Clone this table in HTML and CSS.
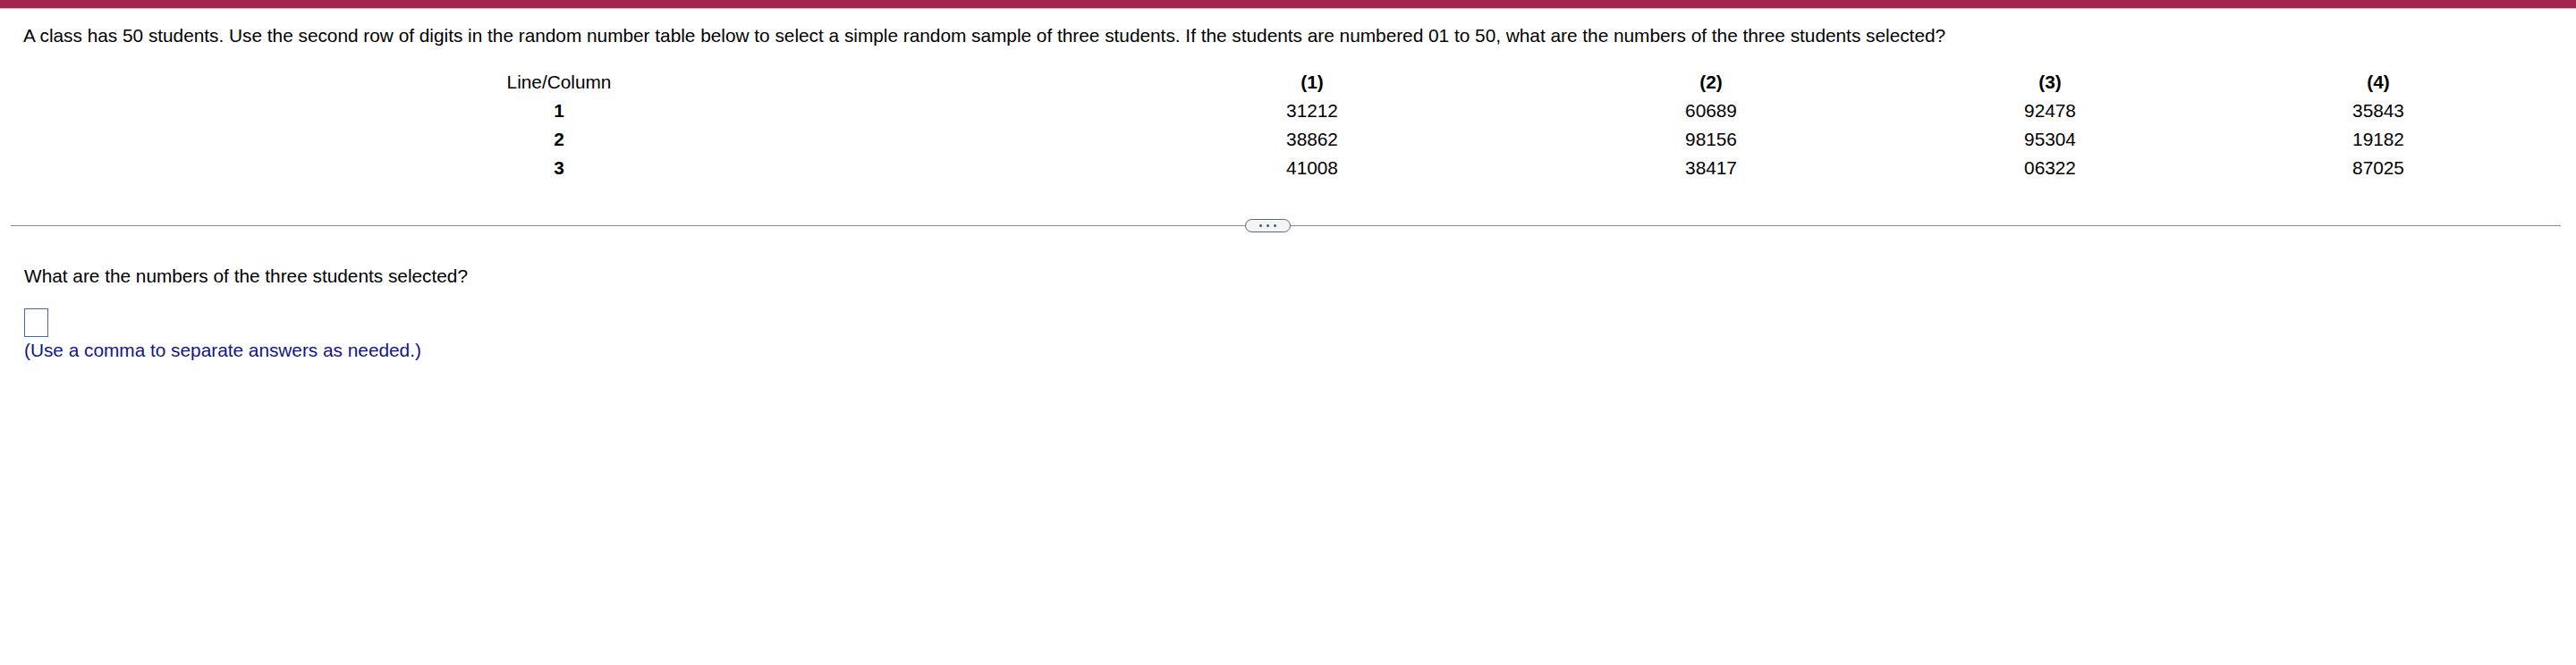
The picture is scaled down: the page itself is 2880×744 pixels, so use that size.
FILE: index.html
```html
<!DOCTYPE html>
<html lang="en">
<head>
<meta charset="utf-8">
<title>Random sample question</title>
<link rel="stylesheet" href="styles.css">
</head>
<body>
<div class="topbar"></div>
<main class="page">
  <p class="question">A class has 50 students. Use the second row of digits in the random number table below to select a simple random sample of three students. If the students are numbered 01 to 50, what are the numbers of the three students selected?</p>
  <div class="table">
    <div class="cell">Line/Column</div>
    <div class="cell bold">(1)</div>
    <div class="cell bold">(2)</div>
    <div class="cell bold">(3)</div>
    <div class="cell bold">(4)</div>

    <div class="cell bold">1</div>
    <div class="cell">31212</div>
    <div class="cell">60689</div>
    <div class="cell">92478</div>
    <div class="cell">35843</div>

    <div class="cell bold">2</div>
    <div class="cell">38862</div>
    <div class="cell">98156</div>
    <div class="cell">95304</div>
    <div class="cell">19182</div>

    <div class="cell bold">3</div>
    <div class="cell">41008</div>
    <div class="cell">38417</div>
    <div class="cell">06322</div>
    <div class="cell">87025</div>
  </div>
  <div class="divider">
    <button class="more" type="button" aria-label="More"><span></span><span></span><span></span></button>
  </div>
  <section class="answer">
    <p class="prompt">What are the numbers of the three students selected?</p>
    <div class="box"></div>
    <p class="hint">(Use a comma to separate answers as needed.)</p>
  </section>
</main>
</body>
</html>
```
FILE: styles.css
```css
html, body {
  margin: 0;
  padding: 0;
  background: #ffffff;
}
body {
  font-family: "Liberation Sans", Arial, sans-serif;
  font-size: 20.8px;
  line-height: 24px;
  color: #000000;
}
.topbar {
  height: 9px;
  background: #a4234b;
  border-bottom: 1px solid #cbbccb;
}
.page {
  display: flex;
  flex-direction: column;
}
.question {
  margin: 18px 0 0 0;
  padding: 0 26px;
}
.table {
  margin-top: 24px;
  margin-left: 26px;
  display: grid;
  grid-template-columns: 1198px 486px 406px 352px 382px;
  grid-auto-rows: 32px;
}
.cell {
  display: flex;
  align-items: center;
  justify-content: center;
}
.bold {
  font-weight: bold;
}
.divider {
  position: relative;
  margin: 48px 17px 0 12px;
  height: 1px;
  background: #7f889c;
}
.more {
  position: absolute;
  left: 1380px;
  top: -7px;
  width: 51px;
  height: 15px;
  padding: 0;
  box-sizing: border-box;
  border: 1.5px solid #5d6778;
  border-radius: 8px;
  background: #f3f4f6;
  display: flex;
  align-items: center;
  justify-content: center;
  gap: 5px;
}
.more span {
  width: 3px;
  height: 3px;
  border-radius: 50%;
  background: #4a5262;
}
.answer {
  padding: 0 27px;
  margin-top: 44px;
  display: flex;
  flex-direction: column;
  align-items: flex-start;
}
.prompt {
  margin: 0;
}
.box {
  margin-top: 24px;
  width: 27px;
  height: 32px;
  box-sizing: border-box;
  border: 1px solid #3d68c9;
  background: #ffffff;
}
.hint {
  margin: 3px 0 0 0;
  color: #14148a;
}
```
